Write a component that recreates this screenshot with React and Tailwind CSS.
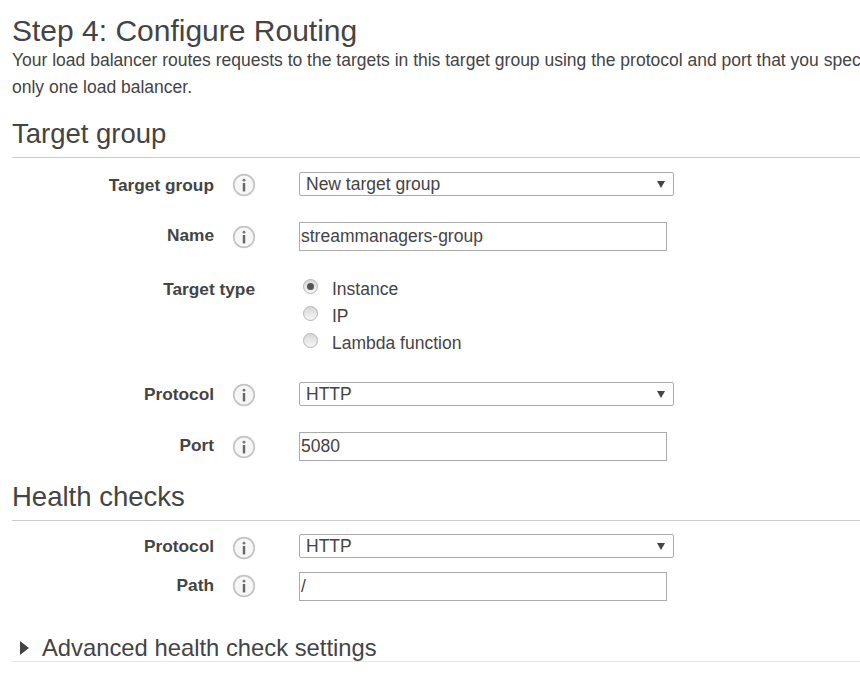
import React from 'react';

const InfoIcon = () => (
  <svg width="24" height="24" viewBox="0 0 24 24" className="shrink-0">
    <circle cx="12" cy="12" r="10.3" fill="#f6f6f6" stroke="#c4c4c4" strokeWidth="1.7" />
    <circle cx="12" cy="7.2" r="1.4" fill="#777" />
    <rect x="10.8" y="10" width="2.4" height="8.4" fill="#666" />
  </svg>
);

const Radio = ({ label, checked }) => (
  <div className="flex items-center h-[27px]">
    <span className="w-[15px] h-[15px] rounded-full border border-[#b4b4b4] bg-gradient-to-b from-[#d8d8d8] to-[#f6f6f6] flex items-center justify-center ml-[4px] mr-[14px] -mt-[6px]">
      {checked && <span className="w-[7px] h-[7px] rounded-full bg-[#555]" />}
    </span>
    <span>{label}</span>
  </div>
);

const Field = ({ label, className = '', labelTop = '', iconTop = '', children }) => (
  <div className={`flex ${className}`}>
    <div className={`w-[202px] text-right font-bold text-[17.3px] leading-[24px] ${labelTop}`}>{label}</div>
    <div className={`w-[85px] pl-[18px] shrink-0 ${iconTop}`}><InfoIcon /></div>
    {children}
  </div>
);

const Select = ({ value }) => (
  <div className="w-[375px] h-[24px] border border-[#aaa] rounded-[2px] flex items-center justify-between pl-[6px] pr-[8px]">
    <span>{value}</span>
    <svg width="8" height="7" viewBox="0 0 8 7"><path d="M0 0h8L4 7z" fill="#444" /></svg>
  </div>
);

const Input = ({ value }) => (
  <div className="w-[368px] h-[29px] border border-[#aaa] flex items-center pl-[1px]">{value}</div>
);

export default function App() {
  return (
    <div className="w-[860px] h-[680px] overflow-hidden bg-white text-[#444] text-[17.5px] px-3 font-['Liberation_Sans',Arial,sans-serif]">
      <h1 className="text-[30px] leading-[32px] pt-[15px]">Step 4: Configure Routing</h1>
      <div className="whitespace-nowrap leading-[27px]">
        <p>Your load balancer routes requests to the targets in this target group using the protocol and port that you spec</p>
        <p>only one load balancer.</p>
      </div>

      <h2 className="text-[27.5px] leading-[32px] mt-[17px] pb-[7px] border-b border-[#ccc] -mr-3">Target group</h2>
      <Field label="Target group" labelTop="mt-[1px]" iconTop="mt-[1px]" className="mt-[14px]"><Select value="New target group" /></Field>
      <Field label="Name" labelTop="mt-[1px]" iconTop="mt-[3px]" className="mt-[25px]"><Input value="streammanagers-group" /></Field>

      <div className="flex mt-[24px]">
        <div className="w-[243px] text-right font-bold text-[17.3px] leading-[24px] mt-[2px]">Target type</div>
        <div className="w-[44px] shrink-0" />
        <div className="pt-[1px]">
          <Radio label="Instance" checked />
          <Radio label="IP" />
          <Radio label="Lambda function" />
        </div>
      </div>

      <Field label="Protocol" iconTop="mt-[1px]" className="mt-[25px]"><Select value="HTTP" /></Field>
      <Field label="Port" labelTop="mt-[1px]" iconTop="mt-[3px]" className="mt-[25px]"><Input value="5080" /></Field>

      <h2 className="text-[27.5px] leading-[32px] mt-[20px] pb-[7px] border-b border-[#ccc] -mr-3">Health checks</h2>
      <Field label="Protocol" iconTop="mt-[2px]" className="mt-[13px]"><Select value="HTTP" /></Field>
      <Field label="Path" labelTop="mt-[1px]" iconTop="mt-[2px]" className="mt-[12px]"><Input value="/" /></Field>

      <div className="flex items-center mt-[32px] pt-[2px] border-b border-[#e4e4e4] -mr-3 h-[29px]">
        <svg width="9" height="14" viewBox="0 0 9 14" className="ml-[8px] mr-[13px]"><path d="M0 0l9 7-9 7z" fill="#444" /></svg>
        <span className="text-[23.8px] leading-[28px]">Advanced health check settings</span>
      </div>
    </div>
  );
}
